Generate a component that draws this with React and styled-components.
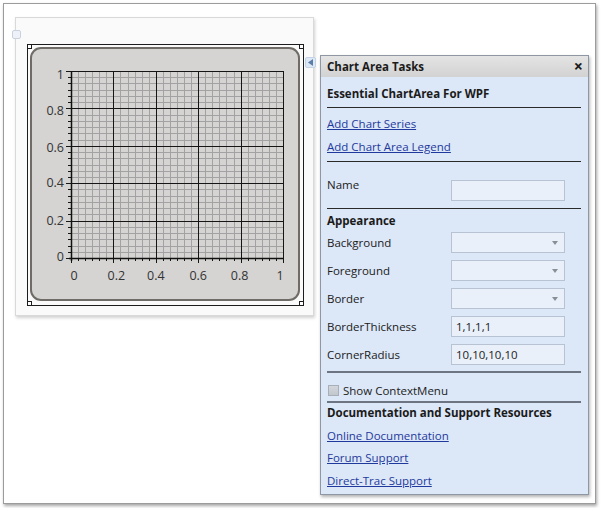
import React from "react";
import styled, { createGlobalStyle } from "styled-components";

const Global = createGlobalStyle`
  html, body { margin: 0; padding: 0; background: #ffffff; }
  body { font-family: "Open Sans", "Noto Sans", sans-serif; }
`;

const FONT = `"Open Sans", "Noto Sans", sans-serif`;

const Page = styled.div`
  padding: 3px;
  width: 601px;
  height: 508px;
  box-sizing: border-box;
`;

const Frame = styled.div`
  width: 593px;
  height: 501px;
  box-sizing: border-box;
  border: 1px solid #9c9c9c;
  box-shadow: 1px 2px 3px rgba(0, 0, 0, 0.35);
  background: #ffffff;
  display: flex;
  align-items: flex-start;
  padding: 13px 0 0 11px;
`;

const Surface = styled.div`
  position: relative;
  width: 299px;
  height: 299px;
  box-sizing: border-box;
  border: 1px solid #d9d9d9;
  background: #fafafa;
  box-shadow: 1px 2px 3px rgba(0, 0, 0, 0.18);
  padding: 26px 0 0 11px;
  flex-shrink: 0;
`;

const AdornerIcon = styled.div`
  position: absolute;
  left: -4px;
  top: 12px;
  width: 7px;
  height: 7px;
  border: 1px solid #c9d3e0;
  border-radius: 2px;
  background: #eef2f8;
`;

const Tab = styled.div`
  position: absolute;
  right: -3px;
  top: 39px;
  width: 11px;
  height: 11px;
  box-sizing: border-box;
  background: #dce8f6;
  border: 1px solid #c3d2e4;
  border-radius: 2px;
  display: flex;
  align-items: center;
  justify-content: center;
`;

const Selection = styled.div`
  position: relative;
  width: 277px;
  height: 262px;
  box-sizing: border-box;
  border: 1px solid #1c1c1c;
  padding: 2px;
`;

const Handle = styled.div`
  position: absolute;
  width: 5px;
  height: 5px;
  box-sizing: border-box;
  border: 1px solid #1c1c1c;
  background: #ffffff;
  ${(p) => (p.$v === "t" ? "top: -1px;" : "bottom: -1px;")}
  ${(p) => (p.$h === "l" ? "left: -1px;" : "right: -1px;")}
`;

const ChartArea = styled.div`
  width: 270px;
  height: 254px;
  box-sizing: border-box;
  border: 2px solid #6f6b67;
  border-radius: 11px;
  background: #d5d4d3;
  overflow: hidden;
`;

const ChartSvg = styled.svg`
  display: block;
  font-family: ${FONT};
`;

const Panel = styled.div`
  margin: 38px 0 0 6px;
  width: 269px;
  height: 440px;
  box-sizing: border-box;
  border: 1px solid #8e97a3;
  background: #dce7f7;
  box-shadow: 1px 2px 3px rgba(0, 0, 0, 0.3);
  font-family: ${FONT};
  font-size: 11.5px;
  color: #1b1b1b;
  display: flex;
  flex-direction: column;
`;

const Header = styled.div`
  height: 21px;
  background: linear-gradient(#e4e4e4, #d2d2d2);
  display: flex;
  align-items: center;
  justify-content: space-between;
  padding: 0 5px 0 6px;
  font-weight: 700;
`;

const Close = styled.span`
  font-size: 16px;
  font-weight: 700;
  line-height: 1;
  margin-top: -2px;
`;

const Body = styled.div`
  padding: 0 7px 0 6px;
  display: flex;
  flex-direction: column;
`;

const Title = styled.div`
  height: 30px;
  padding-top: 2px;
  box-sizing: border-box;
  display: flex;
  align-items: center;
  font-weight: 700;
`;

const Heading = styled.div`
  height: ${(p) => p.$h}px;
  display: flex;
  align-items: center;
  font-weight: 700;
`;

const Divider = styled.div`
  height: ${(p) => (p.$thick ? 2 : 1)}px;
  background: ${(p) => (p.$thick ? "#6c7581" : "#2a2a2a")};
`;

const LinkList = styled.div`
  display: flex;
  flex-direction: column;
  padding: ${(p) => p.$pad};
`;

const LinkRow = styled.div`
  height: ${(p) => p.$h}px;
  display: flex;
  align-items: center;
`;

const Link = styled.a`
  color: #1f3a9c;
  text-decoration: underline;
  cursor: pointer;
`;

const FieldList = styled.div`
  display: flex;
  flex-direction: column;
  gap: 7px;
  padding: ${(p) => p.$pad};
`;

const Field = styled.div`
  display: flex;
  align-items: ${(p) => (p.$top ? "flex-start" : "center")};
  height: 21px;
`;

const Label = styled.span`
  width: 124px;
  flex-shrink: 0;
  line-height: 16px;
  margin-top: ${(p) => (p.$top ? "-3px" : "0")};
`;

const Input = styled.div`
  width: 114px;
  height: 21px;
  box-sizing: border-box;
  border: 1px solid #b7c3d3;
  background: #e9f0fa;
  display: flex;
  align-items: center;
  justify-content: space-between;
  padding: 0 6px 0 4px;
  color: #222;
`;

const Arrow = styled.span`
  width: 0;
  height: 0;
  border-left: 3px solid transparent;
  border-right: 3px solid transparent;
  border-top: 4px solid #8a8f96;
`;

const CheckRow = styled.div`
  height: 28px;
  box-sizing: border-box;
  padding: 6px 0 0 1px;
  display: flex;
  align-items: center;
  gap: 4px;
`;

const Box = styled.span`
  width: 11px;
  height: 11px;
  box-sizing: border-box;
  border: 1px solid #a9afb8;
  background: linear-gradient(#d3d7dc, #c2c7ce);
`;

const X0 = 39, X1 = 251, Y0 = 22, Y1 = 209;

function Chart() {
  const W = X1 - X0, H = Y1 - Y0;
  const minorGrid = [];
  const SUB = 6;
  for (let i = 0; i <= 5 * SUB; i++) {
    if (i % SUB === 0) continue;
    const x = Math.round(X0 + (W * i) / (5 * SUB)) + 0.5;
    const y = Math.round(Y0 + (H * i) / (5 * SUB)) + 0.5;
    minorGrid.push(<line key={"vx" + i} x1={x} x2={x} y1={Y0} y2={Y1} />);
    minorGrid.push(<line key={"hy" + i} x1={X0} x2={X1} y1={y} y2={y} />);
  }
  const major = [];
  const ticks = [];
  const TS = 6;
  for (let i = 0; i <= 5 * TS; i++) {
    const x = Math.round(X0 + (W * i) / (5 * TS)) + 0.5;
    const y = Math.round(Y0 + (H * i) / (5 * TS)) + 0.5;
    const len = i % TS === 0 ? 5 : 3;
    ticks.push(<line key={"tx" + i} x1={x} x2={x} y1={Y1} y2={Y1 + len} />);
    ticks.push(<line key={"ty" + i} x1={X0 - len} x2={X0} y1={y} y2={y} />);
  }
  for (let i = 0; i <= 5; i++) {
    const x = Math.round(X0 + (W * i) / 5) + 0.5;
    const y = Math.round(Y0 + (H * i) / 5) + 0.5;
    major.push(<line key={"mx" + i} x1={x} x2={x} y1={Y0} y2={Y1} />);
    major.push(<line key={"my" + i} x1={X0} x2={X1} y1={y} y2={y} />);
  }
  const xl = ["0", "0.2", "0.4", "0.6", "0.8", "1"];
  const xoff = [3, 3, 0, 0, -1, -3];
  const yl = ["1", "0.8", "0.6", "0.4", "0.2", "0"];
  const yoff = [4, 3, 2, 0, 0, -1];
  return (
    <ChartSvg width="266" height="250" viewBox="0 0 266 250">
      <g stroke="#a2a2a2" strokeWidth="1">{minorGrid}</g>
      <g stroke="#151515" strokeWidth="1">{major}</g>
      <g stroke="#151515" strokeWidth="1">{ticks}</g>
      <line x1={X0 + 0.5} x2={X0 + 0.5} y1={Y0} y2={Y1 + 3} stroke="#111" strokeWidth="1.5" />
      <line x1={X0 - 2} x2={X1} y1={Y1 + 0.5} y2={Y1 + 0.5} stroke="#111" strokeWidth="1.5" />
      <g fontSize="12.5" fill="#333">
        {xl.map((t, i) => (
          <text key={t} x={X0 + (W * i) / 5 + xoff[i]} y={231} textAnchor="middle">{t}</text>
        ))}
        {yl.map((t, i) => (
          <text key={t} x={32} y={Y0 + (H * i) / 5 + yoff[i] + 4} textAnchor="end">{t}</text>
        ))}
      </g>
    </ChartSvg>
  );
}

export default function App() {
  return (
    <Page>
      <Global />
      <Frame>
        <Surface>
          <AdornerIcon />
          <Tab>
            <svg width="5" height="7" viewBox="0 0 5 7">
              <polygon points="5,0 0,3.5 5,7" fill="#5d7da6" />
            </svg>
          </Tab>
          <Selection>
            <Handle $v="t" $h="l" />
            <Handle $v="t" $h="r" />
            <Handle $v="b" $h="l" />
            <Handle $v="b" $h="r" />
            <ChartArea>
              <Chart />
            </ChartArea>
          </Selection>
        </Surface>
        <Panel>
          <Header>
            <span>Chart Area Tasks</span>
            <Close>×</Close>
          </Header>
          <Body>
            <Title>Essential ChartArea For WPF</Title>
            <Divider />
            <LinkList $pad="4px 0 3px">
              <LinkRow $h={23}><Link>Add Chart Series</Link></LinkRow>
              <LinkRow $h={23}><Link>Add Chart Area Legend</Link></LinkRow>
            </LinkList>
            <Divider />
            <FieldList $pad="18px 0 7px">
              <Field $top>
                <Label $top>Name</Label>
                <Input />
              </Field>
            </FieldList>
            <Divider />
            <Heading $h={23}>Appearance</Heading>
            <FieldList $pad="0 0 6px">
              <Field><Label>Background</Label><Input><span /><Arrow /></Input></Field>
              <Field><Label>Foreground</Label><Input><span /><Arrow /></Input></Field>
              <Field><Label>Border</Label><Input><span /><Arrow /></Input></Field>
              <Field><Label>BorderThickness</Label><Input>1,1,1,1</Input></Field>
              <Field><Label>CornerRadius</Label><Input>10,10,10,10</Input></Field>
            </FieldList>
            <Divider $thick />
            <CheckRow>
              <Box />
              <span>Show ContextMenu</span>
            </CheckRow>
            <Divider $thick />
            <Heading $h={19}>Documentation and Support Resources</Heading>
            <LinkList $pad="2px 0 0">
              <LinkRow $h={22.5}><Link>Online Documentation</Link></LinkRow>
              <LinkRow $h={22.5}><Link>Forum Support</Link></LinkRow>
              <LinkRow $h={22.5}><Link>Direct-Trac Support</Link></LinkRow>
            </LinkList>
          </Body>
        </Panel>
      </Frame>
    </Page>
  );
}
